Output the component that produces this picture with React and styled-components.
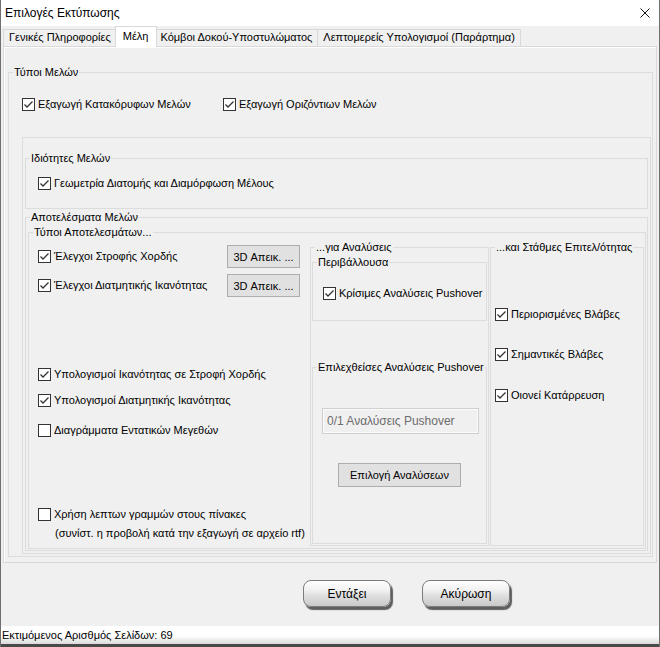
import React from 'react';
import styled, { createGlobalStyle } from 'styled-components';

const GlobalStyle = createGlobalStyle`
  html, body {
    margin: 0;
    padding: 0;
    background: #f0f0f0;
  }
  body {
    font-family: 'Liberation Sans', Arial, sans-serif;
  }
  * {
    box-sizing: border-box;
  }
`;

const Window = styled.div`
  width: 660px;
  height: 647px;
  display: flex;
  flex-direction: column;
  background: #f0f0f0;
  border-left: 1px solid #6f6f6f;
  border-right: 1px solid #6f6f6f;
  font-size: 11px;
  color: #000;
  overflow: hidden;
`;

const TitleBar = styled.div`
  height: 26px;
  flex: none;
  display: flex;
  align-items: center;
  padding: 0 9px 0 4px;
  background: #fff;
  font-size: 12px;
`;

const TitleText = styled.span`
  flex: 1;
  padding-bottom: 1px;
`;

const TabStrip = styled.div`
  height: 20px;
  flex: none;
  display: flex;
  align-items: flex-end;
  padding-left: 2px;
`;

const Tab = styled.div`
  position: relative;
  height: ${(p) => (p.$active ? 21 : 17)}px;
  margin: ${(p) => (p.$active ? '0 -2px -1px -2px' : '0 0 0 -1px')};
  padding: ${(p) => (p.$active ? '2px 8px 0 7px' : '0 5px')};
  z-index: ${(p) => (p.$active ? 2 : 1)};
  border: 1px solid #d9d9d9;
  border-bottom: none;
  background: ${(p) => (p.$active ? '#fff' : '#f0f0f0')};
  line-height: 15px;
  white-space: nowrap;
  &:first-child {
    margin-left: 0;
  }
`;

const Panel = styled.div`
  flex: none;
  margin: 0 2px;
  padding: 19px 3px 5px 4px;
  border: 1px solid #d9d9d9;
  box-shadow: inset 1px 1px 0 #fff;
  background: #f0f0f0;
`;

const Frame = styled.fieldset`
  margin: ${(p) => p.$m || '0'};
  padding: 0;
  border: 1px solid #dcdcdc;
  min-width: 0;
  align-self: stretch;
  display: flex;
  flex-direction: column;
  ${(p) => p.$grow && 'flex: 1;'}
  ${(p) => p.$w && `width: ${p.$w}px; flex: none;`}
`;

const Legend = styled.legend`
  margin-left: 4px;
  padding: 0 1px;
  font-size: 11px;
  line-height: 13px;
  white-space: nowrap;
`;

const Body = styled.div`
  flex: 1;
  display: flex;
  flex-direction: ${(p) => (p.$row ? 'row' : 'column')};
  align-items: ${(p) => (p.$row ? 'stretch' : 'flex-start')};
  padding: ${(p) => p.$pad || '0'};
`;

const GroupBox = ({ title, pad, row, m, grow, w, children }) => (
  <Frame $m={m} $grow={grow} $w={w}>
    {title && <Legend>{title}</Legend>}
    <Body $pad={pad} $row={row}>
      {children}
    </Body>
  </Frame>
);

const CheckRow = styled.div`
  display: grid;
  grid-template-columns: 201px auto;
`;

const CheckLabel = styled.label`
  display: flex;
  align-items: center;
  height: 13px;
  line-height: 13px;
  white-space: nowrap;
  margin-top: ${(p) => p.$mt || 0}px;
`;

const Box = styled.span`
  width: 13px;
  height: 13px;
  flex: none;
  margin-right: 3px;
  border: 1px solid #333;
  background: #fff;
  display: flex;
`;

const Check = ({ label, checked, mt }) => (
  <CheckLabel $mt={mt}>
    <Box>
      {checked && (
        <svg width="11" height="11" viewBox="0 0 11 11">
          <polyline points="1.5,5.5 4,8 9.5,2.5" fill="none" stroke="#333" strokeWidth="1.3" />
        </svg>
      )}
    </Box>
    {label}
  </CheckLabel>
);

const LeftCol = styled.div`
  width: 281px;
  flex: none;
  display: flex;
  flex-direction: column;
  padding: 0 10px 7px 9px;
`;

const ButtonRow = styled.div`
  height: 23px;
  margin-top: 6px;
  display: flex;
  align-items: center;
  justify-content: space-between;
`;

const SmallButton = styled.button`
  width: ${(p) => p.$w || 73}px;
  height: ${(p) => p.$h || 23}px;
  margin-top: ${(p) => p.$mt || 0}px;
  align-self: ${(p) => (p.$center ? 'center' : 'auto')};
  padding: 0;
  border: 1px solid #adadad;
  background: #e1e1e1;
  font: 11px 'Liberation Sans', Arial, sans-serif;
  color: #000;
`;

const Note = styled.div`
  margin-top: 6px;
  padding-left: 17px;
  line-height: 13px;
  white-space: nowrap;
`;

const SideBox = styled.div`
  margin: 2px 0 1px ${(p) => p.$ml || 0}px;
  margin-right: ${(p) => p.$mr || 0}px;
  display: flex;
  ${(p) => (p.$w ? `width: ${p.$w}px; flex: none;` : 'flex: 1;')}
  & > fieldset {
    flex: 1;
  }
`;

const DisabledField = styled.div`
  width: 157px;
  height: 26px;
  margin: 34px 0 0 9px;
  padding: 0 4px;
  border: 1px solid #cfcfcf;
  box-shadow: inset 0 0 0 1px #fbfbfb;
  line-height: 24px;
  font-size: 12px;
  color: #6d6d6d;
`;

const ButtonBar = styled.div`
  flex: 1;
  display: flex;
  align-items: flex-start;
  gap: 31px;
  padding: 17px 0 0 302px;
`;

const BigButton = styled.button`
  width: 88px;
  height: 27px;
  padding: 0;
  border: 1px solid #7c7c7c;
  border-radius: 8px;
  background: linear-gradient(#ffffff 0%, #f2f2f2 35%, #dedede 60%, #c9c9c9 100%);
  box-shadow: 2px 3px 1px #5e5e5e;
  font: 12px 'Liberation Sans', Arial, sans-serif;
  color: #000;
`;

const StatusBar = styled.div`
  height: 18px;
  flex: none;
  padding: 3px 0 0 1px;
  background: linear-gradient(#ffffff 0%, #ffffff 55%, #dadada 100%);
  line-height: 13px;
  font-size: 11px;
  white-space: nowrap;
`;

const BottomEdge = styled.div`
  height: 3px;
  flex: none;
  background: #4a4a4a;
`;

export default function App() {
  return (
    <>
      <GlobalStyle />
      <Window>
        <TitleBar>
          <TitleText>Επιλογές Εκτύπωσης</TitleText>
          <svg width="10" height="10" viewBox="0 0 10 10">
            <path d="M0.5 0.5 L9.5 9.5 M9.5 0.5 L0.5 9.5" stroke="#111" strokeWidth="1" />
          </svg>
        </TitleBar>
        <TabStrip>
          <Tab>Γενικές Πληροφορίες</Tab>
          <Tab $active>Μέλη</Tab>
          <Tab>Κόμβοι Δοκού-Υποστυλώματος</Tab>
          <Tab>Λεπτομερείς Υπολογισμοί (Παράρτημα)</Tab>
        </TabStrip>
        <Panel>
          <GroupBox title="Τύποι Μελών" pad="19px 1px 2px 13px">
            <CheckRow>
              <Check checked label="Εξαγωγή Κατακόρυφων Μελών" />
              <Check checked label="Εξαγωγή Οριζόντιων Μελών" />
            </CheckRow>
            <GroupBox m="26px 0 0 0" pad="14px 2px 2px 2px">
              <GroupBox title="Ιδιότητες Μελών" pad="12px 0 18px 12px">
                <Check checked label="Γεωμετρία Διατομής και Διαμόρφωση Μέλους" />
              </GroupBox>
              <GroupBox title="Αποτελέσματα Μελών" m="2px 0 0 0" pad="2px 1px 1px 2px">
                <GroupBox title="Τύποι Αποτελεσμάτων..." pad="0 1px 1px 0" row>
                  <LeftCol>
                    <ButtonRow>
                      <Check checked label="Έλεγχοι Στροφής Χορδής" />
                      <SmallButton>3D Απεικ. ...</SmallButton>
                    </ButtonRow>
                    <ButtonRow>
                      <Check checked label="Έλεγχοι Διατμητικής Ικανότητας" />
                      <SmallButton>3D Απεικ. ...</SmallButton>
                    </ButtonRow>
                    <Check checked mt={71} label="Υπολογισμοί Ικανότητας σε Στροφή Χορδής" />
                    <Check checked mt={13} label="Υπολογισμοί Διατμητικής Ικανότητας" />
                    <Check mt={17} label="Διαγράμματα Εντατικών Μεγεθών" />
                    <Check mt={71} label="Χρήση λεπτων γραμμών στους πίνακες" />
                    <Note>(συνίστ. η προβολή κατά την εξαγωγή σε αρχείο rtf)</Note>
                  </LeftCol>
                  <SideBox $w={179}>
                    <GroupBox title="...για Αναλύσεις" pad="2px 1px 1px 1px">
                      <GroupBox title="Περιβάλλουσα" pad="18px 0 20px 10px">
                        <Check checked label="Κρίσιμες Αναλύσεις Pushover" />
                      </GroupBox>
                      <GroupBox title="Επιλεχθείσες Αναλύσεις Pushover" m="40px 0 0 0" grow>
                        <DisabledField>0/1 Αναλύσεις Pushover</DisabledField>
                        <SmallButton $w={123} $h={24} $mt={29} $center>
                          Επιλογή Αναλύσεων
                        </SmallButton>
                      </GroupBox>
                    </GroupBox>
                  </SideBox>
                  <SideBox $ml={1} $mr={0}>
                    <GroupBox title="...και Στάθμες Επιτελ/ότητας" pad="0 0 0 4px">
                      <Check checked mt={54} label="Περιορισμένες Βλάβες" />
                      <Check checked mt={27} label="Σημαντικές Βλάβες" />
                      <Check checked mt={28} label="Οιονεί Κατάρρευση" />
                    </GroupBox>
                  </SideBox>
                </GroupBox>
              </GroupBox>
            </GroupBox>
          </GroupBox>
        </Panel>
        <ButtonBar>
          <BigButton>Εντάξει</BigButton>
          <BigButton>Ακύρωση</BigButton>
        </ButtonBar>
        <StatusBar>Εκτιμόμενος Αρισθμός Σελίδων: 69</StatusBar>
        <BottomEdge />
      </Window>
    </>
  );
}
